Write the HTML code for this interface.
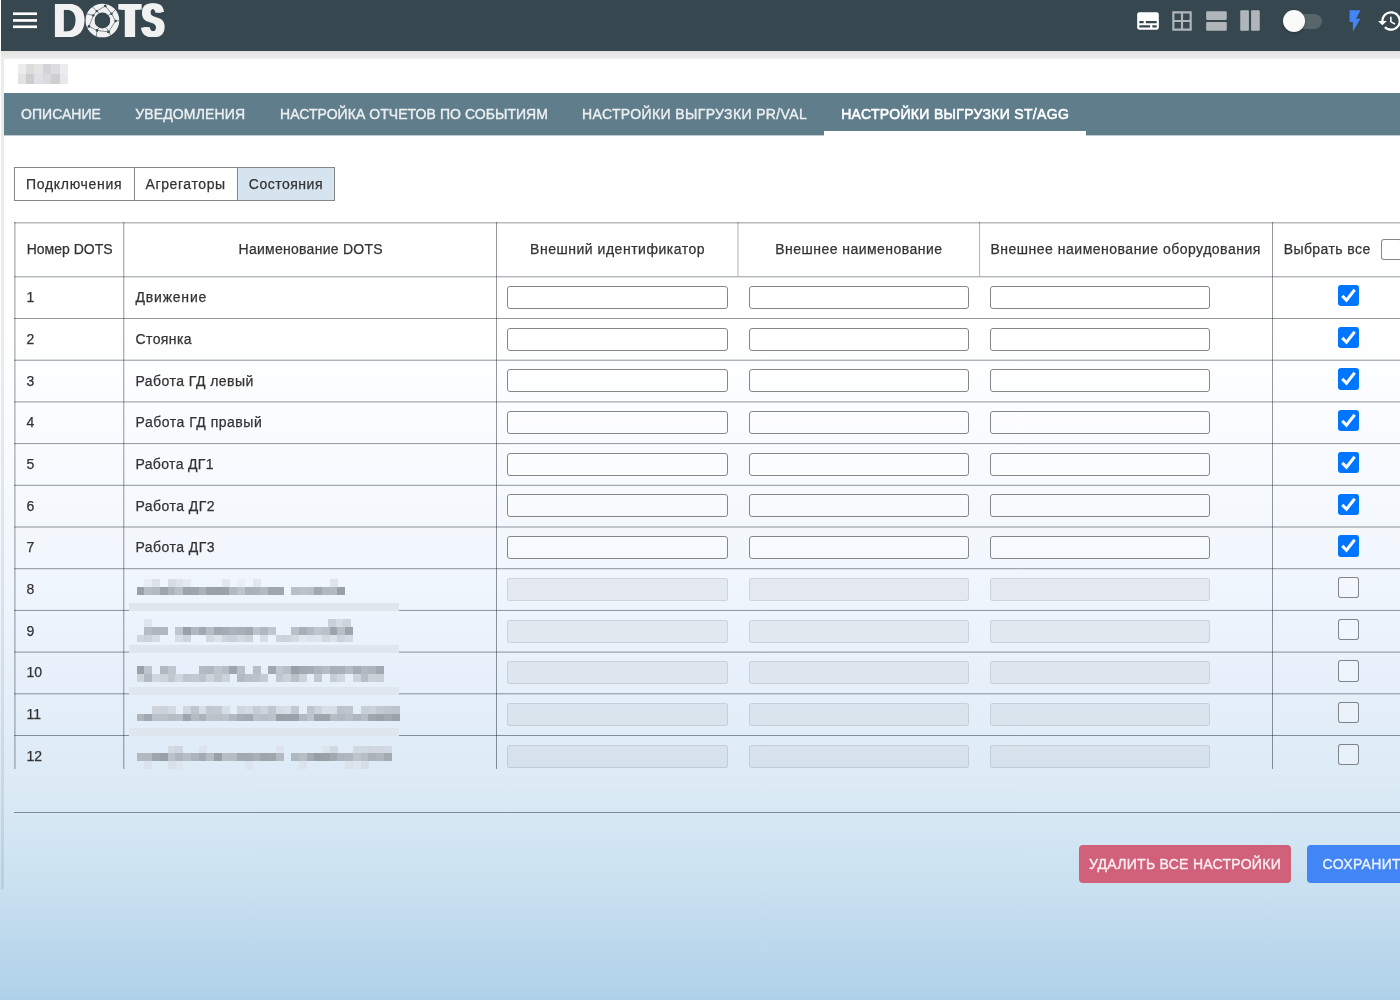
<!DOCTYPE html><html lang="ru"><head><meta charset="utf-8"><title>DOTS</title><style>
*{box-sizing:border-box}
html,body{margin:0;padding:0}
body{width:1400px;height:1000px;overflow:hidden;position:relative;font-family:"Liberation Sans",sans-serif;color:#333;
 background:linear-gradient(to bottom,#ffffff 0px,#ffffff 330px,#f9fbfe 440px,#f2f7fd 560px,#ebf3fc 630px,#e5eff9 700px,#daeaf5 795px,#c7dfef 900px,#aed1e9 1000px)}
.abs{position:absolute}
.hdr{left:1px;top:0;width:1399px;height:51px;background:#37474f}
.hshadow{left:1px;top:51px;width:1399px;height:8px;background:linear-gradient(#e2e2e2,#efefef)}
.lstrip{left:1px;top:59px;width:3px;height:830px;background:rgba(0,0,0,.08)}
.tabs{left:4px;top:93px;width:1396px;height:42px;background:#607d8b}
.tab{position:absolute;top:0;height:42px;line-height:42px;font-size:14px;color:rgba(255,255,255,.83);white-space:nowrap}
.tab.act{color:#fff}
.ink{left:824px;top:131px;width:262px;height:5px;background:#fff}
.bg{position:absolute;top:167px;height:34px;border:1px solid #878787;line-height:32px;font-size:14px;background:#fff;white-space:nowrap}
.hl{position:absolute;height:1px;background:rgba(0,0,0,.47)}
.vl{position:absolute;width:1px;background:rgba(0,0,0,.47)}
.t,.bg{-webkit-text-stroke:.25px}
.tab,.btn{-webkit-text-stroke:.4px}
.tab.act{-webkit-text-stroke:.55px}
.t{position:absolute;font-size:14px;white-space:nowrap;line-height:20px;height:20px}
.inp{display:block;margin:0;padding:0;outline:0;-webkit-appearance:none;appearance:none;font:inherit;position:absolute;width:220px;height:23px;border:1px solid #868686;border-radius:3px;background:rgba(255,255,255,.35)}
.inp.dis{border-color:rgba(118,118,118,.2);background:rgba(175,180,182,.17)}
.cb{position:absolute;width:21.4px;height:21.4px;border-radius:3px}
.cb.on{background:#0075ff}
.cb.off{border:1.5px solid rgba(75,80,88,.68);background:rgba(255,255,255,.25)}
.btn{display:block;margin:0;border:0;padding:0;font-family:inherit;text-align:left;position:absolute;top:845px;height:38px;border-radius:4px;color:rgba(255,255,255,.84);font-size:14px;line-height:38px;white-space:nowrap}
#root{position:absolute;left:0;top:0;width:1400px;height:1000px;overflow:hidden;will-change:transform}
#tw{position:absolute;left:0;top:0;width:1400px;height:769px;overflow:hidden}
</style></head><body><div id="root">
<div class="abs hshadow"></div><div class="abs lstrip"></div>
<div class="abs hdr"></div>
<svg class="abs" style="left:12.7px;top:12px" width="24.4" height="17" viewBox="0 0 24.4 17"><rect x="0" y="0.4" width="24.4" height="2.67" fill="#fff"/><rect x="0" y="7.1" width="24.4" height="2.67" fill="#fff"/><rect x="0" y="13.45" width="24.4" height="2.67" fill="#fff"/></svg>
<div id="logo" class="abs" style="left:0;top:0;width:300px;height:50px;white-space:nowrap;font-size:0;line-height:0"><span style="display:inline-block;vertical-align:top;width:0;height:0;position:relative;left:52.4px;top:-3.7px;font:700 49px/1 'Liberation Sans',sans-serif;color:#f1f1f1;transform-origin:0 0;transform:scaleX(0.9);text-shadow:1.44px 0 0 #f1f1f1,2.84px 0 0 #f1f1f1;">D</span><span style="display:inline-block;vertical-align:top;width:0;height:0;position:relative;left:87.2px;top:-0.8px;font:700 43px/1 'Liberation Sans',sans-serif;color:#f1f1f1;transform-origin:0 0;transform:scaleX(0.92)">O</span><span style="display:inline-block;vertical-align:top;width:0;height:0;position:relative;left:118.3px;top:-3.7px;font:700 49px/1 'Liberation Sans',sans-serif;color:#f1f1f1;transform-origin:0 0;transform:scaleX(0.6);text-shadow:3.33px 0 0 #f1f1f1,6.67px 0 0 #f1f1f1,10.00px 0 0 #f1f1f1;">T</span><span style="display:inline-block;vertical-align:top;width:0;height:0;position:relative;left:139.9px;top:-3.7px;font:700 49px/1 'Liberation Sans',sans-serif;color:#f1f1f1;transform-origin:0 0;transform:scaleX(0.67);text-shadow:2.09px 0 0 #f1f1f1,4.18px 0 0 #f1f1f1,5.97px 0 0 #f1f1f1;">S</span></div>
<svg class="abs" style="left:50px;top:0" width="122" height="42" viewBox="50 0 122 42">
<circle cx="102.4" cy="20.5" r="12.4" fill="none" stroke="#f1f1f1" stroke-width="8.9"/>
<g stroke="#37474f" stroke-width="0.7" fill="none" opacity=".85">
<path d="M105.3 6 96.7 11.1 93.3 15.4 89 26.4 97 30.4 108.5 31.9 115.6 21 111.5 13.7Z"/>
<path d="M96.7 11.1 92 6.5M93.3 15.4 87 14M97 30.4 96.3 36.5M108.5 31.9 111 35.5M115.6 21 119.3 20.5M111.5 13.7 115.5 9.5M105.3 6 106 3.8M89 26.4 86.5 28M96.7 11.1 100 14M111.5 13.7 108 15.5M97 30.4 99 27.5M108.5 31.9 106.5 28"/>
</g>
<g fill="#37474f"><circle cx="105.3" cy="6" r="1.3"/><circle cx="96.7" cy="11.1" r="1.2"/><circle cx="93.3" cy="15.4" r="1.2"/><circle cx="111.5" cy="13.7" r="1.2"/><circle cx="115.6" cy="21" r="1.3"/><circle cx="89" cy="26.4" r="1.3"/><circle cx="97" cy="30.4" r="1.3"/><circle cx="108.5" cy="31.9" r="1.4"/></g>
</svg>
<svg class="abs" style="left:1135px;top:8.2px" width="26" height="26" viewBox="0 0 24 24"><path  fill="#fff" d="M20 4H4c-1.1 0-2 .9-2 2v12c0 1.1.9 2 2 2h16c1.1 0 2-.9 2-2V6c0-1.1-.9-2-2-2zM4 12h4v2H4v-2zm10 6H4v-2h10v2zm6 0h-4v-2h4v2zm0-4H10v-2h10v2z"/></svg>
<svg class="abs" style="left:1169.2px;top:8px" width="26" height="26" viewBox="0 0 24 24"><path  fill="rgba(255,255,255,.6)" d="M3 3v18h18V3H3zm8 16H5v-6h6v6zm0-8H5V5h6v6zm8 8h-6v-6h6v6zm0-8h-6V5h6v6z"/></svg>
<svg class="abs" style="left:1203.5px;top:8px" width="26" height="26" viewBox="0 0 24 24"><path  fill="rgba(255,255,255,.6)" d="M20 13H3c-.55 0-1 .45-1 1v6c0 .55.45 1 1 1h17c.55 0 1-.45 1-1v-6c0-.55-.45-1-1-1zm0-10H3c-.55 0-1 .45-1 1v6c0 .55.45 1 1 1h17c.55 0 1-.45 1-1V4c0-.55-.45-1-1-1z"/></svg>
<svg class="abs" style="left:1236.8px;top:8.2px" width="26" height="26" viewBox="0 0 24 24"><path transform="rotate(90 12 12)" fill="rgba(255,255,255,.6)" d="M20 13H3c-.55 0-1 .45-1 1v6c0 .55.45 1 1 1h17c.55 0 1-.45 1-1v-6c0-.55-.45-1-1-1zm0-10H3c-.55 0-1 .45-1 1v6c0 .55.45 1 1 1h17c.55 0 1-.45 1-1V4c0-.55-.45-1-1-1z"/></svg>
<div class="abs" style="left:1284px;top:13.5px;width:38px;height:15px;border-radius:8px;background:rgba(255,255,255,.17)"></div>
<div class="abs" style="left:1283px;top:10px;width:22px;height:22px;border-radius:50%;background:#fafafa;box-shadow:0 1px 3px rgba(0,0,0,.3)"></div>
<svg class="abs" style="left:1342.3px;top:7.7px" width="26" height="26" viewBox="0 0 24 24"><path  fill="#4285f4" d="M7 2v11h3v9l7-12h-4l4-8z"/></svg>
<svg class="abs" style="left:1377.4px;top:8px" width="26" height="26" viewBox="0 0 24 24"><path  fill="#fff" d="M13 3c-4.97 0-9 4.03-9 9H1l3.89 3.89.07.14L9 12H6c0-3.87 3.13-7 7-7s7 3.13 7 7-3.13 7-7 7c-1.93 0-3.68-.79-4.94-2.06l-1.42 1.42C8.27 19.99 10.51 21 13 21c4.970 0 9-4.03 9-9s-4.03-9-9-9zm-1 5v5l4.28 2.54.72-1.21-3.5-2.08V8H12z"/></svg>
<div class="abs" style="left:17.5px;top:64px;width:8.5px;height:10px;background:#ececec"></div>
<div class="abs" style="left:25.9px;top:64px;width:8.5px;height:10px;background:#dcdcdc"></div>
<div class="abs" style="left:34.3px;top:64px;width:8.5px;height:10px;background:#e4e4e4"></div>
<div class="abs" style="left:42.7px;top:64px;width:8.5px;height:10px;background:#d4d4d8"></div>
<div class="abs" style="left:51.1px;top:64px;width:8.5px;height:10px;background:#dddddd"></div>
<div class="abs" style="left:59.5px;top:64px;width:8.5px;height:10px;background:#ebebf0"></div>
<div class="abs" style="left:17.5px;top:74px;width:8.5px;height:10px;background:#e2e2e2"></div>
<div class="abs" style="left:25.9px;top:74px;width:8.5px;height:10px;background:#cdcdcd"></div>
<div class="abs" style="left:34.3px;top:74px;width:8.5px;height:10px;background:#e0e0e4"></div>
<div class="abs" style="left:42.7px;top:74px;width:8.5px;height:10px;background:#d9d9de"></div>
<div class="abs" style="left:51.1px;top:74px;width:8.5px;height:10px;background:#cfcfcf"></div>
<div class="abs" style="left:59.5px;top:74px;width:8.5px;height:10px;background:#e8e8ee"></div>
<div class="abs tabs">
<span class="tab" style="left:17px;letter-spacing:0.041px">ОПИСАНИЕ</span>
<span class="tab" style="left:131.2px;letter-spacing:0.143px">УВЕДОМЛЕНИЯ</span>
<span class="tab" style="left:276px;letter-spacing:0.057px">НАСТРОЙКА ОТЧЕТОВ ПО СОБЫТИЯМ</span>
<span class="tab" style="left:578px;letter-spacing:0.38px">НАСТРОЙКИ ВЫГРУЗКИ PR/VAL</span>
<span class="tab act" style="left:837.2px;letter-spacing:0.327px">НАСТРОЙКИ ВЫГРУЗКИ ST/AGG</span>
</div><div class="abs" style="left:4px;top:135px;width:1396px;height:1px;background:rgba(96,125,139,.4)"></div><div class="abs ink"></div>
<div class="bg" style="left:14px;width:121px;background:#fff;padding-left:11.0px;letter-spacing:0.711px">Подключения</div>
<div class="bg" style="left:134px;width:104px;background:#fff;padding-left:10.5px;letter-spacing:0.601px">Агрегаторы</div>
<div class="bg" style="left:237px;width:98px;background:#d6e4f0;padding-left:10.8px;letter-spacing:0.505px">Состояния</div>
<div id="tw">
<div class="abs" style="left:14px;top:222px;width:1390px;height:2px;background:linear-gradient(to bottom,rgba(9,20,34,0.286) 0px 1px,rgba(9,20,34,0.154) 1px 2px)"></div>
<div class="abs" style="left:14px;top:276px;width:1390px;height:2px;background:linear-gradient(to bottom,rgba(9,20,34,0.308) 0px 1px,rgba(9,20,34,0.132) 1px 2px)"></div>
<div class="abs" style="left:14px;top:318px;width:1390px;height:1px;background:linear-gradient(to bottom,rgba(9,20,34,0.440) 0px 1px)"></div>
<div class="abs" style="left:14px;top:359px;width:1390px;height:2px;background:linear-gradient(to bottom,rgba(9,20,34,0.132) 0px 1px,rgba(9,20,34,0.308) 1px 2px)"></div>
<div class="abs" style="left:14px;top:401px;width:1390px;height:2px;background:linear-gradient(to bottom,rgba(9,20,34,0.264) 0px 1px,rgba(9,20,34,0.176) 1px 2px)"></div>
<div class="abs" style="left:14px;top:443px;width:1390px;height:2px;background:linear-gradient(to bottom,rgba(9,20,34,0.396) 0px 1px,rgba(9,20,34,0.044) 1px 2px)"></div>
<div class="abs" style="left:14px;top:484px;width:1390px;height:2px;background:linear-gradient(to bottom,rgba(9,20,34,0.088) 0px 1px,rgba(9,20,34,0.352) 1px 2px)"></div>
<div class="abs" style="left:14px;top:526px;width:1390px;height:2px;background:linear-gradient(to bottom,rgba(9,20,34,0.220) 0px 1px,rgba(9,20,34,0.220) 1px 2px)"></div>
<div class="abs" style="left:14px;top:568px;width:1390px;height:2px;background:linear-gradient(to bottom,rgba(9,20,34,0.352) 0px 1px,rgba(9,20,34,0.088) 1px 2px)"></div>
<div class="abs" style="left:14px;top:609px;width:1390px;height:2px;background:linear-gradient(to bottom,rgba(9,20,34,0.044) 0px 1px,rgba(9,20,34,0.396) 1px 2px)"></div>
<div class="abs" style="left:14px;top:651px;width:1390px;height:2px;background:linear-gradient(to bottom,rgba(9,20,34,0.176) 0px 1px,rgba(9,20,34,0.264) 1px 2px)"></div>
<div class="abs" style="left:14px;top:693px;width:1390px;height:2px;background:linear-gradient(to bottom,rgba(9,20,34,0.308) 0px 1px,rgba(9,20,34,0.132) 1px 2px)"></div>
<div class="abs" style="left:14px;top:735px;width:1390px;height:1px;background:linear-gradient(to bottom,rgba(9,20,34,0.440) 0px 1px)"></div>
<div class="abs" style="left:14px;top:776px;width:1390px;height:2px;background:linear-gradient(to bottom,rgba(9,20,34,0.132) 0px 1px,rgba(9,20,34,0.308) 1px 2px)"></div>
<div class="abs" style="left:14px;top:222px;width:2px;height:560px;background:linear-gradient(to right,rgba(9,20,34,0.246) 0px 1px,rgba(9,20,34,0.194) 1px 2px)"></div>
<div class="abs" style="left:123px;top:222px;width:2px;height:560px;background:linear-gradient(to right,rgba(9,20,34,0.317) 0px 1px,rgba(9,20,34,0.123) 1px 2px)"></div>
<div class="abs" style="left:496px;top:222px;width:1px;height:560px;background:linear-gradient(to right,rgba(9,20,34,0.440) 0px 1px)"></div>
<div class="abs" style="left:1272px;top:222px;width:1px;height:560px;background:linear-gradient(to right,rgba(9,20,34,0.440) 0px 1px)"></div>
<div class="abs" style="left:737px;top:222px;width:2px;height:54px;background:linear-gradient(to right,rgba(9,20,34,0.160) 0px 1px,rgba(9,20,34,0.160) 1px 2px)"></div>
<div class="abs" style="left:979px;top:222px;width:2px;height:54px;background:linear-gradient(to right,rgba(9,20,34,0.304) 0px 1px,rgba(9,20,34,0.016) 1px 2px)"></div>
<div class="t" style="left:26.7px;top:238.6px;letter-spacing:0.013px;">Номер DOTS</div>
<div class="t" style="left:238.6px;top:238.6px;letter-spacing:0.262px;">Наименование DOTS</div>
<div class="t" style="left:530.1px;top:238.6px;letter-spacing:0.516px;">Внешний идентификатор</div>
<div class="t" style="left:775.3px;top:238.6px;letter-spacing:0.462px;">Внешнее наименование</div>
<div class="t" style="left:990.5px;top:238.6px;letter-spacing:0.502px;">Внешнее наименование оборудования</div>
<div class="t" style="left:1283.7px;top:238.6px;letter-spacing:0.422px;">Выбрать все</div>
<div class="cb off" style="left:1381px;top:238.7px"></div>
<div class="t" style="left:26.5px;top:287.1px">1</div>
<div class="t" style="left:135.5px;top:287.1px;letter-spacing:0.796px;">Движение</div>
<input type="text" class="inp" style="left:507px;top:285.9px;width:221px">
<input type="text" class="inp" style="left:749px;top:285.9px">
<input type="text" class="inp" style="left:990px;top:285.9px">
<div class="cb on" style="left:1338px;top:285.0px"><svg width="21.4" height="21.4" viewBox="0 0 21.4 21.4" style="display:block"><path d="M4.3 10.9 8.5 15.2 16.7 4.8" fill="none" stroke="#fff" stroke-width="3" stroke-linecap="butt"/></svg></div>
<div class="t" style="left:26.5px;top:328.8px">2</div>
<div class="t" style="left:135.5px;top:328.8px;letter-spacing:0.387px;">Стоянка</div>
<input type="text" class="inp" style="left:507px;top:327.6px;width:221px">
<input type="text" class="inp" style="left:749px;top:327.6px">
<input type="text" class="inp" style="left:990px;top:327.6px">
<div class="cb on" style="left:1338px;top:326.7px"><svg width="21.4" height="21.4" viewBox="0 0 21.4 21.4" style="display:block"><path d="M4.3 10.9 8.5 15.2 16.7 4.8" fill="none" stroke="#fff" stroke-width="3" stroke-linecap="butt"/></svg></div>
<div class="t" style="left:26.5px;top:370.5px">3</div>
<div class="t" style="left:135.5px;top:370.5px;letter-spacing:0.461px;">Работа ГД левый</div>
<input type="text" class="inp" style="left:507px;top:369.3px;width:221px">
<input type="text" class="inp" style="left:749px;top:369.3px">
<input type="text" class="inp" style="left:990px;top:369.3px">
<div class="cb on" style="left:1338px;top:368.4px"><svg width="21.4" height="21.4" viewBox="0 0 21.4 21.4" style="display:block"><path d="M4.3 10.9 8.5 15.2 16.7 4.8" fill="none" stroke="#fff" stroke-width="3" stroke-linecap="butt"/></svg></div>
<div class="t" style="left:26.5px;top:412.2px">4</div>
<div class="t" style="left:135.5px;top:412.2px;letter-spacing:0.508px;">Работа ГД правый</div>
<input type="text" class="inp" style="left:507px;top:411.0px;width:221px">
<input type="text" class="inp" style="left:749px;top:411.0px">
<input type="text" class="inp" style="left:990px;top:411.0px">
<div class="cb on" style="left:1338px;top:410.1px"><svg width="21.4" height="21.4" viewBox="0 0 21.4 21.4" style="display:block"><path d="M4.3 10.9 8.5 15.2 16.7 4.8" fill="none" stroke="#fff" stroke-width="3" stroke-linecap="butt"/></svg></div>
<div class="t" style="left:26.5px;top:453.9px">5</div>
<div class="t" style="left:135.5px;top:453.9px;letter-spacing:0.346px;">Работа ДГ1</div>
<input type="text" class="inp" style="left:507px;top:452.7px;width:221px">
<input type="text" class="inp" style="left:749px;top:452.7px">
<input type="text" class="inp" style="left:990px;top:452.7px">
<div class="cb on" style="left:1338px;top:451.8px"><svg width="21.4" height="21.4" viewBox="0 0 21.4 21.4" style="display:block"><path d="M4.3 10.9 8.5 15.2 16.7 4.8" fill="none" stroke="#fff" stroke-width="3" stroke-linecap="butt"/></svg></div>
<div class="t" style="left:26.5px;top:495.6px">6</div>
<div class="t" style="left:135.5px;top:495.6px;letter-spacing:0.446px;">Работа ДГ2</div>
<input type="text" class="inp" style="left:507px;top:494.4px;width:221px">
<input type="text" class="inp" style="left:749px;top:494.4px">
<input type="text" class="inp" style="left:990px;top:494.4px">
<div class="cb on" style="left:1338px;top:493.5px"><svg width="21.4" height="21.4" viewBox="0 0 21.4 21.4" style="display:block"><path d="M4.3 10.9 8.5 15.2 16.7 4.8" fill="none" stroke="#fff" stroke-width="3" stroke-linecap="butt"/></svg></div>
<div class="t" style="left:26.5px;top:537.2px">7</div>
<div class="t" style="left:135.5px;top:537.2px;letter-spacing:0.446px;">Работа ДГ3</div>
<input type="text" class="inp" style="left:507px;top:536.1px;width:221px">
<input type="text" class="inp" style="left:749px;top:536.1px">
<input type="text" class="inp" style="left:990px;top:536.1px">
<div class="cb on" style="left:1338px;top:535.2px"><svg width="21.4" height="21.4" viewBox="0 0 21.4 21.4" style="display:block"><path d="M4.3 10.9 8.5 15.2 16.7 4.8" fill="none" stroke="#fff" stroke-width="3" stroke-linecap="butt"/></svg></div>
<div class="t" style="left:26.5px;top:579.0px">8</div>
<input type="text" class="inp dis" disabled style="left:507px;top:577.8px;width:221px">
<input type="text" class="inp dis" disabled style="left:749px;top:577.8px">
<input type="text" class="inp dis" disabled style="left:990px;top:577.8px">
<div class="cb off" style="left:1338px;top:576.9px"></div>
<div class="t" style="left:26.5px;top:620.7px">9</div>
<input type="text" class="inp dis" disabled style="left:507px;top:619.5px;width:221px">
<input type="text" class="inp dis" disabled style="left:749px;top:619.5px">
<input type="text" class="inp dis" disabled style="left:990px;top:619.5px">
<div class="cb off" style="left:1338px;top:618.6px"></div>
<div class="t" style="left:26.5px;top:662.4px">10</div>
<input type="text" class="inp dis" disabled style="left:507px;top:661.2px;width:221px">
<input type="text" class="inp dis" disabled style="left:749px;top:661.2px">
<input type="text" class="inp dis" disabled style="left:990px;top:661.2px">
<div class="cb off" style="left:1338px;top:660.3px"></div>
<div class="t" style="left:26.5px;top:704.0px">11</div>
<input type="text" class="inp dis" disabled style="left:507px;top:702.9px;width:221px">
<input type="text" class="inp dis" disabled style="left:749px;top:702.9px">
<input type="text" class="inp dis" disabled style="left:990px;top:702.9px">
<div class="cb off" style="left:1338px;top:702.0px"></div>
<div class="t" style="left:26.5px;top:745.8px">12</div>
<input type="text" class="inp dis" disabled style="left:507px;top:744.6px;width:221px">
<input type="text" class="inp dis" disabled style="left:749px;top:744.6px">
<input type="text" class="inp dis" disabled style="left:990px;top:744.6px">
<div class="cb off" style="left:1338px;top:743.7px"></div>
<div class="abs" style="left:129px;top:603px;width:269.6px;height:8px;background:#e0e6ee"></div>
<div class="abs" style="left:129px;top:645px;width:269.6px;height:8px;background:#e0e6ee"></div>
<div class="abs" style="left:129px;top:687px;width:269.6px;height:8px;background:#e0e6ee"></div>
<div class="abs" style="left:129px;top:728px;width:269.6px;height:8px;background:#e0e6ee"></div>
<div class="abs" style="left:144.4px;top:579.0px;width:8.0px;height:7.6px;background:rgba(228,234,242,0.7)"></div><div class="abs" style="left:152.1px;top:579.0px;width:8.0px;height:7.6px;background:rgba(213,219,227,0.7)"></div><div class="abs" style="left:167.6px;top:579.0px;width:8.0px;height:7.6px;background:rgba(204,210,218,0.7)"></div><div class="abs" style="left:175.3px;top:579.0px;width:8.0px;height:7.6px;background:rgba(214,220,228,0.7)"></div><div class="abs" style="left:183.0px;top:579.0px;width:8.0px;height:7.6px;background:rgba(224,230,238,0.7)"></div><div class="abs" style="left:221.6px;top:579.0px;width:8.0px;height:7.6px;background:rgba(219,225,233,0.7)"></div><div class="abs" style="left:237.1px;top:579.0px;width:8.0px;height:7.6px;background:rgba(229,235,243,0.7)"></div><div class="abs" style="left:252.5px;top:579.0px;width:8.0px;height:7.6px;background:rgba(219,225,233,0.7)"></div><div class="abs" style="left:329.7px;top:579.0px;width:8.0px;height:7.6px;background:rgba(215,221,229,0.7)"></div>
<div class="abs" style="left:136.7px;top:586.5px;width:8.0px;height:8.2px;background:rgba(154,160,168,1.0)"></div><div class="abs" style="left:144.4px;top:586.5px;width:8.0px;height:8.2px;background:rgba(183,189,197,1.0)"></div><div class="abs" style="left:152.1px;top:586.5px;width:8.0px;height:8.2px;background:rgba(180,186,194,1.0)"></div><div class="abs" style="left:159.9px;top:586.5px;width:8.0px;height:8.2px;background:rgba(159,165,173,1.0)"></div><div class="abs" style="left:167.6px;top:586.5px;width:8.0px;height:8.2px;background:rgba(174,180,188,1.0)"></div><div class="abs" style="left:175.3px;top:586.5px;width:8.0px;height:8.2px;background:rgba(186,192,200,1.0)"></div><div class="abs" style="left:183.0px;top:586.5px;width:8.0px;height:8.2px;background:rgba(158,164,172,1.0)"></div><div class="abs" style="left:190.7px;top:586.5px;width:8.0px;height:8.2px;background:rgba(160,166,174,1.0)"></div><div class="abs" style="left:198.5px;top:586.5px;width:8.0px;height:8.2px;background:rgba(172,178,186,1.0)"></div><div class="abs" style="left:206.2px;top:586.5px;width:8.0px;height:8.2px;background:rgba(155,161,169,1.0)"></div><div class="abs" style="left:213.9px;top:586.5px;width:8.0px;height:8.2px;background:rgba(154,160,168,1.0)"></div><div class="abs" style="left:221.6px;top:586.5px;width:8.0px;height:8.2px;background:rgba(157,163,171,1.0)"></div><div class="abs" style="left:229.3px;top:586.5px;width:8.0px;height:8.2px;background:rgba(179,185,193,1.0)"></div><div class="abs" style="left:237.1px;top:586.5px;width:8.0px;height:8.2px;background:rgba(190,196,204,1.0)"></div><div class="abs" style="left:244.8px;top:586.5px;width:8.0px;height:8.2px;background:rgba(171,177,185,1.0)"></div><div class="abs" style="left:252.5px;top:586.5px;width:8.0px;height:8.2px;background:rgba(173,179,187,1.0)"></div><div class="abs" style="left:260.2px;top:586.5px;width:8.0px;height:8.2px;background:rgba(180,186,194,1.0)"></div><div class="abs" style="left:267.9px;top:586.5px;width:8.0px;height:8.2px;background:rgba(161,167,175,1.0)"></div><div class="abs" style="left:275.7px;top:586.5px;width:8.0px;height:8.2px;background:rgba(160,166,174,1.0)"></div><div class="abs" style="left:291.1px;top:586.5px;width:8.0px;height:8.2px;background:rgba(185,191,199,1.0)"></div><div class="abs" style="left:298.8px;top:586.5px;width:8.0px;height:8.2px;background:rgba(189,195,203,1.0)"></div><div class="abs" style="left:306.5px;top:586.5px;width:8.0px;height:8.2px;background:rgba(186,192,200,1.0)"></div><div class="abs" style="left:314.3px;top:586.5px;width:8.0px;height:8.2px;background:rgba(162,168,176,1.0)"></div><div class="abs" style="left:322.0px;top:586.5px;width:8.0px;height:8.2px;background:rgba(178,184,192,1.0)"></div><div class="abs" style="left:329.7px;top:586.5px;width:8.0px;height:8.2px;background:rgba(180,186,194,1.0)"></div><div class="abs" style="left:337.4px;top:586.5px;width:8.0px;height:8.2px;background:rgba(154,160,168,1.0)"></div>
<div class="abs" style="left:144.4px;top:618.5px;width:8.0px;height:8.0px;background:rgba(219,225,233,0.8)"></div>
<div class="abs" style="left:328.0px;top:618.5px;width:8.0px;height:8.0px;background:rgba(199,205,213,0.9)"></div><div class="abs" style="left:335.7px;top:618.5px;width:8.0px;height:8.0px;background:rgba(211,217,225,0.9)"></div><div class="abs" style="left:343.4px;top:618.5px;width:8.0px;height:8.0px;background:rgba(202,208,216,0.9)"></div>
<div class="abs" style="left:144.4px;top:626.6px;width:8.0px;height:8.0px;background:rgba(182,188,196,1.0)"></div><div class="abs" style="left:152.1px;top:626.6px;width:8.0px;height:8.0px;background:rgba(175,181,189,1.0)"></div><div class="abs" style="left:159.9px;top:626.6px;width:8.0px;height:8.0px;background:rgba(178,184,192,1.0)"></div><div class="abs" style="left:175.3px;top:626.6px;width:8.0px;height:8.0px;background:rgba(191,197,205,1.0)"></div><div class="abs" style="left:183.0px;top:626.6px;width:8.0px;height:8.0px;background:rgba(154,160,168,1.0)"></div><div class="abs" style="left:190.7px;top:626.6px;width:8.0px;height:8.0px;background:rgba(177,183,191,1.0)"></div><div class="abs" style="left:198.5px;top:626.6px;width:8.0px;height:8.0px;background:rgba(162,168,176,1.0)"></div><div class="abs" style="left:206.2px;top:626.6px;width:8.0px;height:8.0px;background:rgba(184,190,198,1.0)"></div><div class="abs" style="left:213.9px;top:626.6px;width:8.0px;height:8.0px;background:rgba(162,168,176,1.0)"></div><div class="abs" style="left:221.6px;top:626.6px;width:8.0px;height:8.0px;background:rgba(165,171,179,1.0)"></div><div class="abs" style="left:229.3px;top:626.6px;width:8.0px;height:8.0px;background:rgba(173,179,187,1.0)"></div><div class="abs" style="left:237.1px;top:626.6px;width:8.0px;height:8.0px;background:rgba(169,175,183,1.0)"></div><div class="abs" style="left:244.8px;top:626.6px;width:8.0px;height:8.0px;background:rgba(164,170,178,1.0)"></div><div class="abs" style="left:252.5px;top:626.6px;width:8.0px;height:8.0px;background:rgba(189,195,203,1.0)"></div><div class="abs" style="left:260.2px;top:626.6px;width:8.0px;height:8.0px;background:rgba(178,184,192,1.0)"></div><div class="abs" style="left:267.9px;top:626.6px;width:8.0px;height:8.0px;background:rgba(192,198,206,1.0)"></div><div class="abs" style="left:291.1px;top:626.6px;width:8.0px;height:8.0px;background:rgba(186,192,200,1.0)"></div><div class="abs" style="left:298.8px;top:626.6px;width:8.0px;height:8.0px;background:rgba(169,175,183,1.0)"></div><div class="abs" style="left:306.5px;top:626.6px;width:8.0px;height:8.0px;background:rgba(179,185,193,1.0)"></div><div class="abs" style="left:314.3px;top:626.6px;width:8.0px;height:8.0px;background:rgba(192,198,206,1.0)"></div><div class="abs" style="left:322.0px;top:626.6px;width:8.0px;height:8.0px;background:rgba(187,193,201,1.0)"></div><div class="abs" style="left:329.7px;top:626.6px;width:8.0px;height:8.0px;background:rgba(158,164,172,1.0)"></div><div class="abs" style="left:337.4px;top:626.6px;width:8.0px;height:8.0px;background:rgba(184,190,198,1.0)"></div><div class="abs" style="left:345.1px;top:626.6px;width:8.0px;height:8.0px;background:rgba(158,164,172,1.0)"></div>
<div class="abs" style="left:136.7px;top:634.6px;width:8.0px;height:7.6px;background:rgba(200,206,214,0.8)"></div><div class="abs" style="left:144.4px;top:634.6px;width:8.0px;height:7.6px;background:rgba(196,202,210,0.8)"></div><div class="abs" style="left:152.1px;top:634.6px;width:8.0px;height:7.6px;background:rgba(208,214,222,0.8)"></div><div class="abs" style="left:175.3px;top:634.6px;width:8.0px;height:7.6px;background:rgba(210,216,224,0.8)"></div><div class="abs" style="left:183.0px;top:634.6px;width:8.0px;height:7.6px;background:rgba(198,204,212,0.8)"></div><div class="abs" style="left:206.2px;top:634.6px;width:8.0px;height:7.6px;background:rgba(204,210,218,0.8)"></div><div class="abs" style="left:213.9px;top:634.6px;width:8.0px;height:7.6px;background:rgba(216,222,230,0.8)"></div><div class="abs" style="left:221.6px;top:634.6px;width:8.0px;height:7.6px;background:rgba(198,204,212,0.8)"></div><div class="abs" style="left:229.3px;top:634.6px;width:8.0px;height:7.6px;background:rgba(194,200,208,0.8)"></div><div class="abs" style="left:237.1px;top:634.6px;width:8.0px;height:7.6px;background:rgba(205,211,219,0.8)"></div><div class="abs" style="left:244.8px;top:634.6px;width:8.0px;height:7.6px;background:rgba(195,201,209,0.8)"></div><div class="abs" style="left:260.2px;top:634.6px;width:8.0px;height:7.6px;background:rgba(209,215,223,0.8)"></div><div class="abs" style="left:275.7px;top:634.6px;width:8.0px;height:7.6px;background:rgba(198,204,212,0.8)"></div><div class="abs" style="left:283.4px;top:634.6px;width:8.0px;height:7.6px;background:rgba(196,202,210,0.8)"></div><div class="abs" style="left:291.1px;top:634.6px;width:8.0px;height:7.6px;background:rgba(205,211,219,0.8)"></div><div class="abs" style="left:298.8px;top:634.6px;width:8.0px;height:7.6px;background:rgba(222,228,236,0.8)"></div><div class="abs" style="left:306.5px;top:634.6px;width:8.0px;height:7.6px;background:rgba(217,223,231,0.8)"></div><div class="abs" style="left:314.3px;top:634.6px;width:8.0px;height:7.6px;background:rgba(219,225,233,0.8)"></div><div class="abs" style="left:322.0px;top:634.6px;width:8.0px;height:7.6px;background:rgba(204,210,218,0.8)"></div><div class="abs" style="left:329.7px;top:634.6px;width:8.0px;height:7.6px;background:rgba(215,221,229,0.8)"></div><div class="abs" style="left:337.4px;top:634.6px;width:8.0px;height:7.6px;background:rgba(196,202,210,0.8)"></div><div class="abs" style="left:345.1px;top:634.6px;width:8.0px;height:7.6px;background:rgba(207,213,221,0.8)"></div>
<div class="abs" style="left:136.7px;top:666.4px;width:8.0px;height:7.7px;background:rgba(155,161,169,1.0)"></div><div class="abs" style="left:144.4px;top:666.4px;width:8.0px;height:7.7px;background:rgba(190,196,204,1.0)"></div><div class="abs" style="left:159.9px;top:666.4px;width:8.0px;height:7.7px;background:rgba(178,184,192,1.0)"></div><div class="abs" style="left:167.6px;top:666.4px;width:8.0px;height:7.7px;background:rgba(192,198,206,1.0)"></div><div class="abs" style="left:198.5px;top:666.4px;width:8.0px;height:7.7px;background:rgba(180,186,194,1.0)"></div><div class="abs" style="left:206.2px;top:666.4px;width:8.0px;height:7.7px;background:rgba(178,184,192,1.0)"></div><div class="abs" style="left:213.9px;top:666.4px;width:8.0px;height:7.7px;background:rgba(191,197,205,1.0)"></div><div class="abs" style="left:221.6px;top:666.4px;width:8.0px;height:7.7px;background:rgba(183,189,197,1.0)"></div><div class="abs" style="left:229.3px;top:666.4px;width:8.0px;height:7.7px;background:rgba(159,165,173,1.0)"></div><div class="abs" style="left:237.1px;top:666.4px;width:8.0px;height:7.7px;background:rgba(186,192,200,1.0)"></div><div class="abs" style="left:252.5px;top:666.4px;width:8.0px;height:7.7px;background:rgba(184,190,198,1.0)"></div><div class="abs" style="left:267.9px;top:666.4px;width:8.0px;height:7.7px;background:rgba(161,167,175,1.0)"></div><div class="abs" style="left:275.7px;top:666.4px;width:8.0px;height:7.7px;background:rgba(193,199,207,1.0)"></div><div class="abs" style="left:283.4px;top:666.4px;width:8.0px;height:7.7px;background:rgba(185,191,199,1.0)"></div><div class="abs" style="left:291.1px;top:666.4px;width:8.0px;height:7.7px;background:rgba(154,160,168,1.0)"></div><div class="abs" style="left:298.8px;top:666.4px;width:8.0px;height:7.7px;background:rgba(163,169,177,1.0)"></div><div class="abs" style="left:306.5px;top:666.4px;width:8.0px;height:7.7px;background:rgba(166,172,180,1.0)"></div><div class="abs" style="left:314.3px;top:666.4px;width:8.0px;height:7.7px;background:rgba(175,181,189,1.0)"></div><div class="abs" style="left:322.0px;top:666.4px;width:8.0px;height:7.7px;background:rgba(182,188,196,1.0)"></div><div class="abs" style="left:329.7px;top:666.4px;width:8.0px;height:7.7px;background:rgba(169,175,183,1.0)"></div><div class="abs" style="left:337.4px;top:666.4px;width:8.0px;height:7.7px;background:rgba(170,176,184,1.0)"></div><div class="abs" style="left:345.1px;top:666.4px;width:8.0px;height:7.7px;background:rgba(181,187,195,1.0)"></div><div class="abs" style="left:352.9px;top:666.4px;width:8.0px;height:7.7px;background:rgba(166,172,180,1.0)"></div><div class="abs" style="left:360.6px;top:666.4px;width:8.0px;height:7.7px;background:rgba(178,184,192,1.0)"></div><div class="abs" style="left:368.3px;top:666.4px;width:8.0px;height:7.7px;background:rgba(174,180,188,1.0)"></div><div class="abs" style="left:376.0px;top:666.4px;width:8.0px;height:7.7px;background:rgba(162,168,176,1.0)"></div>
<div class="abs" style="left:136.7px;top:674.1px;width:8.0px;height:7.7px;background:rgba(205,211,219,1.0)"></div><div class="abs" style="left:144.4px;top:674.1px;width:8.0px;height:7.7px;background:rgba(180,186,194,1.0)"></div><div class="abs" style="left:152.1px;top:674.1px;width:8.0px;height:7.7px;background:rgba(209,215,223,1.0)"></div><div class="abs" style="left:159.9px;top:674.1px;width:8.0px;height:7.7px;background:rgba(205,211,219,1.0)"></div><div class="abs" style="left:167.6px;top:674.1px;width:8.0px;height:7.7px;background:rgba(193,199,207,1.0)"></div><div class="abs" style="left:175.3px;top:674.1px;width:8.0px;height:7.7px;background:rgba(208,214,222,1.0)"></div><div class="abs" style="left:183.0px;top:674.1px;width:8.0px;height:7.7px;background:rgba(192,198,206,1.0)"></div><div class="abs" style="left:190.7px;top:674.1px;width:8.0px;height:7.7px;background:rgba(195,201,209,1.0)"></div><div class="abs" style="left:198.5px;top:674.1px;width:8.0px;height:7.7px;background:rgba(189,195,203,1.0)"></div><div class="abs" style="left:206.2px;top:674.1px;width:8.0px;height:7.7px;background:rgba(205,211,219,1.0)"></div><div class="abs" style="left:213.9px;top:674.1px;width:8.0px;height:7.7px;background:rgba(193,199,207,1.0)"></div><div class="abs" style="left:221.6px;top:674.1px;width:8.0px;height:7.7px;background:rgba(205,211,219,1.0)"></div><div class="abs" style="left:237.1px;top:674.1px;width:8.0px;height:7.7px;background:rgba(180,186,194,1.0)"></div><div class="abs" style="left:244.8px;top:674.1px;width:8.0px;height:7.7px;background:rgba(187,193,201,1.0)"></div><div class="abs" style="left:252.5px;top:674.1px;width:8.0px;height:7.7px;background:rgba(188,194,202,1.0)"></div><div class="abs" style="left:260.2px;top:674.1px;width:8.0px;height:7.7px;background:rgba(197,203,211,1.0)"></div><div class="abs" style="left:275.7px;top:674.1px;width:8.0px;height:7.7px;background:rgba(193,199,207,1.0)"></div><div class="abs" style="left:283.4px;top:674.1px;width:8.0px;height:7.7px;background:rgba(203,209,217,1.0)"></div><div class="abs" style="left:291.1px;top:674.1px;width:8.0px;height:7.7px;background:rgba(186,192,200,1.0)"></div><div class="abs" style="left:298.8px;top:674.1px;width:8.0px;height:7.7px;background:rgba(204,210,218,1.0)"></div><div class="abs" style="left:314.3px;top:674.1px;width:8.0px;height:7.7px;background:rgba(193,199,207,1.0)"></div><div class="abs" style="left:329.7px;top:674.1px;width:8.0px;height:7.7px;background:rgba(199,205,213,1.0)"></div><div class="abs" style="left:337.4px;top:674.1px;width:8.0px;height:7.7px;background:rgba(209,215,223,1.0)"></div><div class="abs" style="left:352.9px;top:674.1px;width:8.0px;height:7.7px;background:rgba(205,211,219,1.0)"></div><div class="abs" style="left:360.6px;top:674.1px;width:8.0px;height:7.7px;background:rgba(184,190,198,1.0)"></div><div class="abs" style="left:368.3px;top:674.1px;width:8.0px;height:7.7px;background:rgba(203,209,217,1.0)"></div><div class="abs" style="left:376.0px;top:674.1px;width:8.0px;height:7.7px;background:rgba(201,207,215,1.0)"></div>
<div class="abs" style="left:152.1px;top:706.0px;width:8.0px;height:7.6px;background:rgba(201,207,215,0.9)"></div><div class="abs" style="left:159.9px;top:706.0px;width:8.0px;height:7.6px;background:rgba(200,206,214,0.9)"></div><div class="abs" style="left:167.6px;top:706.0px;width:8.0px;height:7.6px;background:rgba(208,214,222,0.9)"></div><div class="abs" style="left:183.0px;top:706.0px;width:8.0px;height:7.6px;background:rgba(206,212,220,0.9)"></div><div class="abs" style="left:190.7px;top:706.0px;width:8.0px;height:7.6px;background:rgba(186,192,200,0.9)"></div><div class="abs" style="left:198.5px;top:706.0px;width:8.0px;height:7.6px;background:rgba(212,218,226,0.9)"></div><div class="abs" style="left:206.2px;top:706.0px;width:8.0px;height:7.6px;background:rgba(188,194,202,0.9)"></div><div class="abs" style="left:213.9px;top:706.0px;width:8.0px;height:7.6px;background:rgba(190,196,204,0.9)"></div><div class="abs" style="left:221.6px;top:706.0px;width:8.0px;height:7.6px;background:rgba(213,219,227,0.9)"></div><div class="abs" style="left:237.1px;top:706.0px;width:8.0px;height:7.6px;background:rgba(204,210,218,0.9)"></div><div class="abs" style="left:244.8px;top:706.0px;width:8.0px;height:7.6px;background:rgba(209,215,223,0.9)"></div><div class="abs" style="left:252.5px;top:706.0px;width:8.0px;height:7.6px;background:rgba(194,200,208,0.9)"></div><div class="abs" style="left:260.2px;top:706.0px;width:8.0px;height:7.6px;background:rgba(204,210,218,0.9)"></div><div class="abs" style="left:267.9px;top:706.0px;width:8.0px;height:7.6px;background:rgba(187,193,201,0.9)"></div><div class="abs" style="left:275.7px;top:706.0px;width:8.0px;height:7.6px;background:rgba(210,216,224,0.9)"></div><div class="abs" style="left:283.4px;top:706.0px;width:8.0px;height:7.6px;background:rgba(213,219,227,0.9)"></div><div class="abs" style="left:291.1px;top:706.0px;width:8.0px;height:7.6px;background:rgba(190,196,204,0.9)"></div><div class="abs" style="left:306.5px;top:706.0px;width:8.0px;height:7.6px;background:rgba(186,192,200,0.9)"></div><div class="abs" style="left:314.3px;top:706.0px;width:8.0px;height:7.6px;background:rgba(201,207,215,0.9)"></div><div class="abs" style="left:322.0px;top:706.0px;width:8.0px;height:7.6px;background:rgba(213,219,227,0.9)"></div><div class="abs" style="left:329.7px;top:706.0px;width:8.0px;height:7.6px;background:rgba(213,219,227,0.9)"></div><div class="abs" style="left:337.4px;top:706.0px;width:8.0px;height:7.6px;background:rgba(184,190,198,0.9)"></div><div class="abs" style="left:345.1px;top:706.0px;width:8.0px;height:7.6px;background:rgba(186,192,200,0.9)"></div><div class="abs" style="left:360.6px;top:706.0px;width:8.0px;height:7.6px;background:rgba(197,203,211,0.9)"></div><div class="abs" style="left:368.3px;top:706.0px;width:8.0px;height:7.6px;background:rgba(199,205,213,0.9)"></div><div class="abs" style="left:376.0px;top:706.0px;width:8.0px;height:7.6px;background:rgba(190,196,204,0.9)"></div><div class="abs" style="left:383.7px;top:706.0px;width:8.0px;height:7.6px;background:rgba(186,192,200,0.9)"></div><div class="abs" style="left:391.5px;top:706.0px;width:8.0px;height:7.6px;background:rgba(185,191,199,0.9)"></div>
<div class="abs" style="left:136.7px;top:713.6px;width:8.0px;height:7.6px;background:rgba(175,181,189,1.0)"></div><div class="abs" style="left:144.4px;top:713.6px;width:8.0px;height:7.6px;background:rgba(162,168,176,1.0)"></div><div class="abs" style="left:152.1px;top:713.6px;width:8.0px;height:7.6px;background:rgba(187,193,201,1.0)"></div><div class="abs" style="left:159.9px;top:713.6px;width:8.0px;height:7.6px;background:rgba(187,193,201,1.0)"></div><div class="abs" style="left:167.6px;top:713.6px;width:8.0px;height:7.6px;background:rgba(182,188,196,1.0)"></div><div class="abs" style="left:175.3px;top:713.6px;width:8.0px;height:7.6px;background:rgba(185,191,199,1.0)"></div><div class="abs" style="left:183.0px;top:713.6px;width:8.0px;height:7.6px;background:rgba(159,165,173,1.0)"></div><div class="abs" style="left:190.7px;top:713.6px;width:8.0px;height:7.6px;background:rgba(182,188,196,1.0)"></div><div class="abs" style="left:198.5px;top:713.6px;width:8.0px;height:7.6px;background:rgba(172,178,186,1.0)"></div><div class="abs" style="left:206.2px;top:713.6px;width:8.0px;height:7.6px;background:rgba(189,195,203,1.0)"></div><div class="abs" style="left:213.9px;top:713.6px;width:8.0px;height:7.6px;background:rgba(187,193,201,1.0)"></div><div class="abs" style="left:221.6px;top:713.6px;width:8.0px;height:7.6px;background:rgba(189,195,203,1.0)"></div><div class="abs" style="left:229.3px;top:713.6px;width:8.0px;height:7.6px;background:rgba(178,184,192,1.0)"></div><div class="abs" style="left:237.1px;top:713.6px;width:8.0px;height:7.6px;background:rgba(167,173,181,1.0)"></div><div class="abs" style="left:244.8px;top:713.6px;width:8.0px;height:7.6px;background:rgba(163,169,177,1.0)"></div><div class="abs" style="left:252.5px;top:713.6px;width:8.0px;height:7.6px;background:rgba(187,193,201,1.0)"></div><div class="abs" style="left:260.2px;top:713.6px;width:8.0px;height:7.6px;background:rgba(185,191,199,1.0)"></div><div class="abs" style="left:267.9px;top:713.6px;width:8.0px;height:7.6px;background:rgba(188,194,202,1.0)"></div><div class="abs" style="left:275.7px;top:713.6px;width:8.0px;height:7.6px;background:rgba(154,160,168,1.0)"></div><div class="abs" style="left:283.4px;top:713.6px;width:8.0px;height:7.6px;background:rgba(155,161,169,1.0)"></div><div class="abs" style="left:291.1px;top:713.6px;width:8.0px;height:7.6px;background:rgba(156,162,170,1.0)"></div><div class="abs" style="left:298.8px;top:713.6px;width:8.0px;height:7.6px;background:rgba(179,185,193,1.0)"></div><div class="abs" style="left:306.5px;top:713.6px;width:8.0px;height:7.6px;background:rgba(190,196,204,1.0)"></div><div class="abs" style="left:314.3px;top:713.6px;width:8.0px;height:7.6px;background:rgba(159,165,173,1.0)"></div><div class="abs" style="left:322.0px;top:713.6px;width:8.0px;height:7.6px;background:rgba(158,164,172,1.0)"></div><div class="abs" style="left:329.7px;top:713.6px;width:8.0px;height:7.6px;background:rgba(183,189,197,1.0)"></div><div class="abs" style="left:337.4px;top:713.6px;width:8.0px;height:7.6px;background:rgba(179,185,193,1.0)"></div><div class="abs" style="left:345.1px;top:713.6px;width:8.0px;height:7.6px;background:rgba(184,190,198,1.0)"></div><div class="abs" style="left:352.9px;top:713.6px;width:8.0px;height:7.6px;background:rgba(175,181,189,1.0)"></div><div class="abs" style="left:360.6px;top:713.6px;width:8.0px;height:7.6px;background:rgba(184,190,198,1.0)"></div><div class="abs" style="left:368.3px;top:713.6px;width:8.0px;height:7.6px;background:rgba(160,166,174,1.0)"></div><div class="abs" style="left:376.0px;top:713.6px;width:8.0px;height:7.6px;background:rgba(155,161,169,1.0)"></div><div class="abs" style="left:383.7px;top:713.6px;width:8.0px;height:7.6px;background:rgba(162,168,176,1.0)"></div><div class="abs" style="left:391.5px;top:713.6px;width:8.0px;height:7.6px;background:rgba(155,161,169,1.0)"></div>
<div class="abs" style="left:167.6px;top:745.6px;width:8.0px;height:7.7px;background:rgba(206,212,220,0.8)"></div><div class="abs" style="left:175.3px;top:745.6px;width:8.0px;height:7.7px;background:rgba(202,208,216,0.8)"></div><div class="abs" style="left:198.5px;top:745.6px;width:8.0px;height:7.7px;background:rgba(218,224,232,0.8)"></div><div class="abs" style="left:275.7px;top:745.6px;width:8.0px;height:7.7px;background:rgba(219,225,233,0.8)"></div><div class="abs" style="left:322.0px;top:745.6px;width:8.0px;height:7.7px;background:rgba(219,225,233,0.8)"></div><div class="abs" style="left:329.7px;top:745.6px;width:8.0px;height:7.7px;background:rgba(204,210,218,0.8)"></div><div class="abs" style="left:352.9px;top:745.6px;width:8.0px;height:7.7px;background:rgba(205,211,219,0.8)"></div><div class="abs" style="left:360.6px;top:745.6px;width:8.0px;height:7.7px;background:rgba(205,211,219,0.8)"></div><div class="abs" style="left:368.3px;top:745.6px;width:8.0px;height:7.7px;background:rgba(203,209,217,0.8)"></div><div class="abs" style="left:376.0px;top:745.6px;width:8.0px;height:7.7px;background:rgba(203,209,217,0.8)"></div><div class="abs" style="left:383.7px;top:745.6px;width:8.0px;height:7.7px;background:rgba(207,213,221,0.8)"></div>
<div class="abs" style="left:136.7px;top:753.3px;width:8.0px;height:7.7px;background:rgba(179,185,193,1.0)"></div><div class="abs" style="left:144.4px;top:753.3px;width:8.0px;height:7.7px;background:rgba(178,184,192,1.0)"></div><div class="abs" style="left:152.1px;top:753.3px;width:8.0px;height:7.7px;background:rgba(160,166,174,1.0)"></div><div class="abs" style="left:159.9px;top:753.3px;width:8.0px;height:7.7px;background:rgba(153,159,167,1.0)"></div><div class="abs" style="left:167.6px;top:753.3px;width:8.0px;height:7.7px;background:rgba(188,194,202,1.0)"></div><div class="abs" style="left:175.3px;top:753.3px;width:8.0px;height:7.7px;background:rgba(175,181,189,1.0)"></div><div class="abs" style="left:183.0px;top:753.3px;width:8.0px;height:7.7px;background:rgba(184,190,198,1.0)"></div><div class="abs" style="left:190.7px;top:753.3px;width:8.0px;height:7.7px;background:rgba(173,179,187,1.0)"></div><div class="abs" style="left:198.5px;top:753.3px;width:8.0px;height:7.7px;background:rgba(164,170,178,1.0)"></div><div class="abs" style="left:206.2px;top:753.3px;width:8.0px;height:7.7px;background:rgba(182,188,196,1.0)"></div><div class="abs" style="left:213.9px;top:753.3px;width:8.0px;height:7.7px;background:rgba(154,160,168,1.0)"></div><div class="abs" style="left:221.6px;top:753.3px;width:8.0px;height:7.7px;background:rgba(184,190,198,1.0)"></div><div class="abs" style="left:229.3px;top:753.3px;width:8.0px;height:7.7px;background:rgba(182,188,196,1.0)"></div><div class="abs" style="left:237.1px;top:753.3px;width:8.0px;height:7.7px;background:rgba(163,169,177,1.0)"></div><div class="abs" style="left:244.8px;top:753.3px;width:8.0px;height:7.7px;background:rgba(163,169,177,1.0)"></div><div class="abs" style="left:252.5px;top:753.3px;width:8.0px;height:7.7px;background:rgba(170,176,184,1.0)"></div><div class="abs" style="left:260.2px;top:753.3px;width:8.0px;height:7.7px;background:rgba(158,164,172,1.0)"></div><div class="abs" style="left:267.9px;top:753.3px;width:8.0px;height:7.7px;background:rgba(160,166,174,1.0)"></div><div class="abs" style="left:275.7px;top:753.3px;width:8.0px;height:7.7px;background:rgba(181,187,195,1.0)"></div><div class="abs" style="left:291.1px;top:753.3px;width:8.0px;height:7.7px;background:rgba(177,183,191,1.0)"></div><div class="abs" style="left:298.8px;top:753.3px;width:8.0px;height:7.7px;background:rgba(184,190,198,1.0)"></div><div class="abs" style="left:306.5px;top:753.3px;width:8.0px;height:7.7px;background:rgba(165,171,179,1.0)"></div><div class="abs" style="left:314.3px;top:753.3px;width:8.0px;height:7.7px;background:rgba(152,158,166,1.0)"></div><div class="abs" style="left:322.0px;top:753.3px;width:8.0px;height:7.7px;background:rgba(154,160,168,1.0)"></div><div class="abs" style="left:329.7px;top:753.3px;width:8.0px;height:7.7px;background:rgba(163,169,177,1.0)"></div><div class="abs" style="left:337.4px;top:753.3px;width:8.0px;height:7.7px;background:rgba(175,181,189,1.0)"></div><div class="abs" style="left:345.1px;top:753.3px;width:8.0px;height:7.7px;background:rgba(177,183,191,1.0)"></div><div class="abs" style="left:352.9px;top:753.3px;width:8.0px;height:7.7px;background:rgba(190,196,204,1.0)"></div><div class="abs" style="left:360.6px;top:753.3px;width:8.0px;height:7.7px;background:rgba(184,190,198,1.0)"></div><div class="abs" style="left:368.3px;top:753.3px;width:8.0px;height:7.7px;background:rgba(172,178,186,1.0)"></div><div class="abs" style="left:376.0px;top:753.3px;width:8.0px;height:7.7px;background:rgba(177,183,191,1.0)"></div><div class="abs" style="left:383.7px;top:753.3px;width:8.0px;height:7.7px;background:rgba(164,170,178,1.0)"></div>
<div class="abs" style="left:144.4px;top:761.0px;width:8.0px;height:7.7px;background:rgba(217,223,231,0.7)"></div><div class="abs" style="left:167.6px;top:761.0px;width:8.0px;height:7.7px;background:rgba(214,220,228,0.7)"></div><div class="abs" style="left:175.3px;top:761.0px;width:8.0px;height:7.7px;background:rgba(221,227,235,0.7)"></div><div class="abs" style="left:244.8px;top:761.0px;width:8.0px;height:7.7px;background:rgba(218,224,232,0.7)"></div><div class="abs" style="left:298.8px;top:761.0px;width:8.0px;height:7.7px;background:rgba(218,224,232,0.7)"></div><div class="abs" style="left:345.1px;top:761.0px;width:8.0px;height:7.7px;background:rgba(215,221,229,0.7)"></div><div class="abs" style="left:352.9px;top:761.0px;width:8.0px;height:7.7px;background:rgba(221,227,235,0.7)"></div><div class="abs" style="left:360.6px;top:761.0px;width:8.0px;height:7.7px;background:rgba(209,215,223,0.7)"></div>
</div>
<div class="abs" style="left:14px;top:812px;width:1390px;height:1px;background:linear-gradient(to bottom,rgba(9,20,34,0.440) 0px 1px)"></div>
<button type="button" class="btn" style="left:1079px;width:212px;background:#d1617b;padding-left:10px;letter-spacing:0.284px">УДАЛИТЬ ВСЕ НАСТРОЙКИ</button>
<button type="button" class="btn" style="left:1307px;width:120px;background:#4285f4;padding-left:15.5px;letter-spacing:0.326px">СОХРАНИТЬ</button>
</div></body></html>
